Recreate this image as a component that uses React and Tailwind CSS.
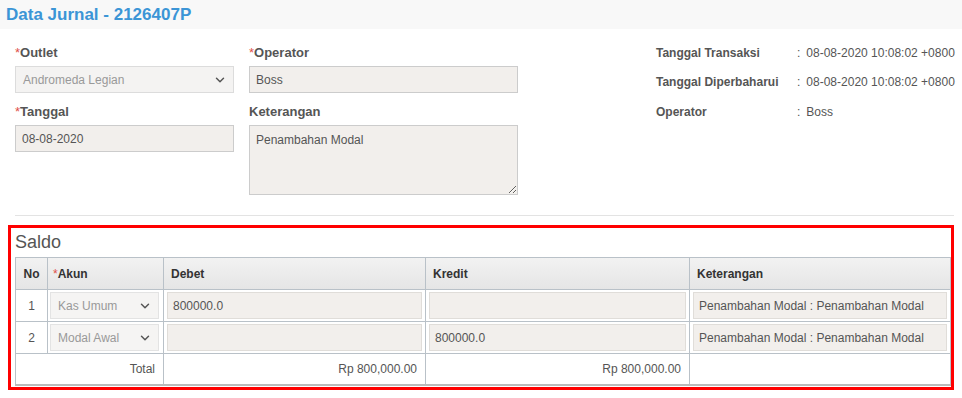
import React from 'react';
import { ChevronDown } from 'lucide-react';

const font = { fontFamily: '"Liberation Sans", Arial, sans-serif' };

const Label = ({ children, required }) => (
  <label className="block text-[13px] font-bold text-[#555] leading-[15px] mb-[6px]">
    {required && <span className="text-[#e0504a] font-normal">*</span>}
    {children}
  </label>
);

const FakeSelect = ({ value, className = '' }) => (
  <div className={`relative flex items-center h-[27px] bg-[#f4f3f2] border border-[#dcdcdc] text-[12px] text-[#999] pl-[7px] ${className}`}>
    <span>{value}</span>
    <ChevronDown className="absolute right-[6px] top-1/2 -translate-y-1/2 text-[#555]" size={14} strokeWidth={2.5} />
  </div>
);

const TextBox = ({ value, className = '' }) => (
  <input
    type="text"
    readOnly
    value={value}
    className={`h-[27px] w-full bg-[#f2efec] border border-[#ccc] px-[6px] text-[12px] text-[#555] outline-none ${className}`}
  />
);

const InfoRow = ({ label, value }) => (
  <div className="flex items-center h-[29.5px] text-[12px] text-[#555] whitespace-nowrap">
    <span className="w-[141px] shrink-0 font-bold">{label}</span>
    <span className="mr-[6px]">:</span>
    <span>{value}</span>
  </div>
);

const CellInput = ({ value }) => (
  <div className="h-[27px] flex items-center bg-[#f2efec] border border-[#e0ddd9] px-[5px] text-[12px] text-[#555]">
    {value}
  </div>
);

const rows = [
  { no: 1, akun: 'Kas Umum', debet: '800000.0', kredit: '', ket: 'Penambahan Modal : Penambahan Modal' },
  { no: 2, akun: 'Modal Awal', debet: '', kredit: '800000.0', ket: 'Penambahan Modal : Penambahan Modal' },
];

export default function App() {
  return (
    <div className="w-[962px] h-[398px] bg-white overflow-hidden" style={font}>
      <div className="h-[29px] bg-[#f8f8f8] flex items-center px-[6px]">
        <h1 className="text-[17px] font-bold text-[#3b95d6]">Data Jurnal - 2126407P</h1>
      </div>

      <div className="px-[15px]">
        <div className="flex pt-[16px] h-[186px]">
          <div className="w-[219px] shrink-0">
            <Label required>Outlet</Label>
            <FakeSelect value="Andromeda Legian" />
            <div className="mt-[11px]">
              <Label required>Tanggal</Label>
              <TextBox value="08-08-2020" />
            </div>
          </div>
          <div className="w-[269px] shrink-0 ml-[15px]">
            <Label required>Operator</Label>
            <TextBox value="Boss" />
            <div className="mt-[11px]">
              <Label>Keterangan</Label>
              <textarea
                readOnly
                value="Penambahan Modal"
                className="block w-full h-[70px] bg-[#f2efec] border border-[#ccc] px-[6px] py-[5px] text-[12px] text-[#555] outline-none"
              />
            </div>
          </div>
          <div className="ml-[138px] -mt-[7px] shrink-0">
            <InfoRow label="Tanggal Transaksi" value="08-08-2020 10:08:02 +0800" />
            <InfoRow label="Tanggal Diperbaharui" value="08-08-2020 10:08:02 +0800" />
            <InfoRow label="Operator" value="Boss" />
          </div>
        </div>
        <hr className="border-0 border-t border-[#e3e3e3] mr-[-7px]" />
      </div>

      <div className="mx-[8px] mt-[9px] w-[946px] border-[3px] border-[#ff0000] pl-[4px] pb-[1px]">
        <div className="text-[18px] text-[#555] h-[29px] flex items-center">Saldo</div>
        <table className="w-[936px] border-collapse text-[12px] text-[#555] table-fixed border-b-2 border-b-[#bbb]">
          <colgroup>
            <col className="w-[32px]" />
            <col className="w-[116px]" />
            <col className="w-[262px]" />
            <col className="w-[264px]" />
            <col />
          </colgroup>
          <thead>
            <tr className="h-[32px] bg-gradient-to-b from-[#f2f2f2] to-[#e5e5e5] text-[#333] font-bold text-left">
              <th className="border border-[#b9c1c8] text-center">No</th>
              <th className="border border-[#b9c1c8] px-[5px]">
                <span className="text-[#e0504a] font-normal">*</span>Akun
              </th>
              <th className="border border-[#b9c1c8] px-[7px]">Debet</th>
              <th className="border border-[#b9c1c8] px-[7px]">Kredit</th>
              <th className="border border-[#b9c1c8] px-[7px]">Keterangan</th>
            </tr>
          </thead>
          <tbody>
            {rows.map((r) => (
              <tr key={r.no} className="h-[32px]">
                <td className="border border-[#b9c1c8] text-center">{r.no}</td>
                <td className="border border-[#b9c1c8] px-[2px] py-[2px]">
                  <FakeSelect value={r.akun} className="mr-[2px] !bg-[#f5f4f3] !border-[#e3e3e3]" />
                </td>
                <td className="border border-[#b9c1c8] px-[3px] py-[2px]">
                  <CellInput value={r.debet} />
                </td>
                <td className="border border-[#b9c1c8] px-[3px] py-[2px]">
                  <CellInput value={r.kredit} />
                </td>
                <td className="border border-[#b9c1c8] px-[3px] py-[2px]">
                  <CellInput value={r.ket} />
                </td>
              </tr>
            ))}
            <tr className="h-[31px]">
              <td colSpan={2} className="border border-[#b9c1c8] text-right pr-[8px]">Total</td>
              <td className="border border-[#b9c1c8] text-right pr-[8px]">Rp 800,000.00</td>
              <td className="border border-[#b9c1c8] text-right pr-[8px]">Rp 800,000.00</td>
              <td className="border border-[#b9c1c8]"></td>
            </tr>
          </tbody>
        </table>
      </div>
    </div>
  );
}
